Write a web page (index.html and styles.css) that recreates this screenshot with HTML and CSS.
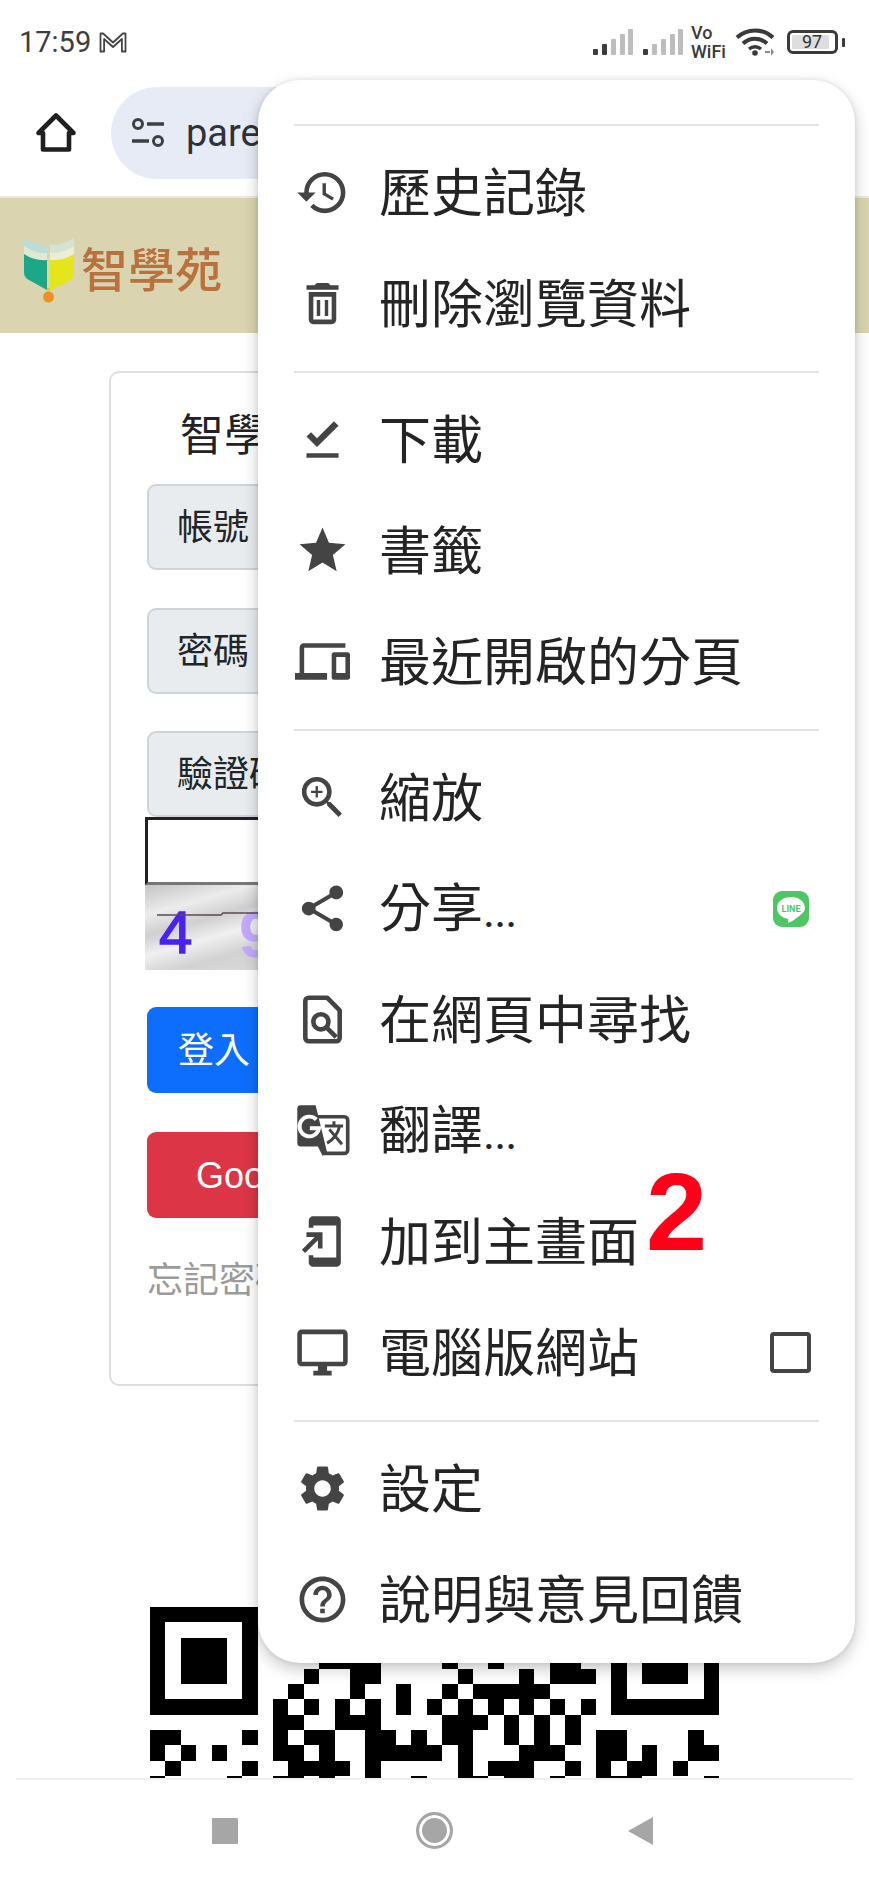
FILE: index.html
```html
<!DOCTYPE html>
<html lang="zh-Hant">
<head>
<meta charset="utf-8">
<title>智學苑</title>
<link rel="stylesheet" href="styles.css">
</head>
<body>
<div class="phone">
  <div class="status">
    <span class="time">17:59</span>
    <svg class="gmail" viewBox="0 0 28 22"><path d="M1.5 20.5V2.5h2.6L14 11.5l9.9-9h2.6v18h-3.6V8L14 16 5.100 8v12.500z" fill="none" stroke="#444" stroke-width="1.800" stroke-linejoin="round"/></svg>
    <div class="status-right">
      <svg class="signal" viewBox="0 0 40 26"><rect x="0" y="20" width="5" height="6" rx="1" fill="#3d3d3d"/><rect x="9" y="15" width="5" height="11" rx="1" fill="#3d3d3d"/><rect x="18" y="10" width="5" height="16" rx="1" fill="#bdbdbd"/><rect x="27" y="5" width="5" height="21" rx="1" fill="#bdbdbd"/><rect x="35" y="0" width="5" height="26" rx="1" fill="#bdbdbd"/></svg>
      <svg class="signal" viewBox="0 0 40 26"><rect x="0" y="20" width="5" height="6" rx="1" fill="#3d3d3d"/><rect x="9" y="15" width="5" height="11" rx="1" fill="#bdbdbd"/><rect x="18" y="10" width="5" height="16" rx="1" fill="#bdbdbd"/><rect x="27" y="5" width="5" height="21" rx="1" fill="#bdbdbd"/><rect x="35" y="0" width="5" height="26" rx="1" fill="#bdbdbd"/></svg>
      <div class="vowifi"><span>Vo</span><span>WiFi</span></div>
      <svg class="wifi" viewBox="0 0 40 28"><path d="M2 9.500C12 0 28 0 38 9.500" fill="none" stroke="#3a3a3a" stroke-width="4"/><path d="M8 15.500C15 9 25 9 32 15.500" fill="none" stroke="#3a3a3a" stroke-width="4"/><path d="M14 21c3.500-3 8.500-3 12 0" fill="none" stroke="#3a3a3a" stroke-width="3.500"/><circle cx="20" cy="25" r="2.800" fill="#3a3a3a"/><path d="M30 23h5v2h-5zM36 20l3 4-3 4z" fill="#8a8a8a"/></svg>
      <div class="battery"><div class="battery-body"><span class="battery-fill">97</span></div><i class="battery-nub"></i></div>
    </div>
  </div>

  <div class="toolbar">
    <svg class="home" viewBox="0 0 42 42"><path d="M21 3.500 3.500 21H8v16.500h26V21h4.500z" fill="none" stroke="#1f1f1f" stroke-width="4.600" stroke-linejoin="round"/></svg>
    <div class="address">
      <svg class="tune" viewBox="0 0 34 30"><circle cx="7" cy="6" r="4.500" fill="none" stroke="#3c4043" stroke-width="3"/><path d="M16 6h17M1 23h17" stroke="#3c4043" stroke-width="3.400"/><circle cx="27" cy="23" r="4.500" fill="none" stroke="#3c4043" stroke-width="3"/></svg>
      <span class="url">parent.example.tw</span>
    </div>
  </div>

  <header class="site-head">
    <svg class="logo-mark" viewBox="0 0 54 72">
      <path d="M2 6Q14 14 25 13V24Q12 24 2 16z" fill="#bcdcd8"/>
      <path d="M2 14Q14 22 25 21V30Q12 30 2 22z" fill="#dfe9d2"/>
      <path d="M2 22Q12 29 25 28V58L7 48Q2 46 2 40z" fill="#1aa886"/>
      <path d="M52 6Q40 14 28 13V24Q42 24 52 16z" fill="#d3e4d6"/>
      <path d="M52 14Q40 22 28 21V30Q42 30 52 22z" fill="#ebeed2"/>
      <path d="M52 22Q42 29 28 28V58L46 50Q52 47 52 41z" fill="#e6e41a"/>
      <path d="M25 56h3v8h-3z" fill="#e8c63a"/>
      <circle cx="26.500" cy="65" r="5.500" fill="#ee9122"/>
    </svg>
    <span class="logo-text">智學苑</span>
  </header>

  <main class="content">
    <section class="card">
      <h1 class="card-title">智學苑</h1>
      <div class="field"><span class="field-label">帳號</span><span class="field-input"></span></div>
      <div class="field"><span class="field-label">密碼</span><span class="field-input"></span></div>
      <div class="field field-tight"><span class="field-label">驗證碼</span><span class="field-input"></span></div>
      <div class="captcha-input"></div>
      <svg class="captcha" viewBox="0 0 300 85">
        <defs><linearGradient id="cg" x1="0" y1="0" x2="1" y2="1"><stop offset="0" stop-color="#c4c4c4"/><stop offset=".18" stop-color="#ececec"/><stop offset=".3" stop-color="#cfcfcf"/><stop offset=".42" stop-color="#f0f0f0"/><stop offset=".55" stop-color="#d2d2d2"/><stop offset="1" stop-color="#e8e8e8"/></linearGradient></defs>
        <rect width="300" height="85" fill="url(#cg)"/>
        <text class="cap-a" x="14" y="68">4</text>
        <text class="cap-b" x="94" y="72">9</text>
        <path d="M12 30H76l2-2H130" fill="none" stroke="#5c4a55" stroke-width="1.600"/>
      </svg>
      <button class="btn btn-blue">登入</button>
      <button class="btn btn-red">Google 登入</button>
      <p class="forgot">忘記密碼</p>
    </section>
    <svg class="qr" viewBox="0 0 37 37" shape-rendering="crispEdges">
      <path d="M0 0h7v7H0zM1 1v5h5V1zM2 2h3v3H2z" fill-rule="evenodd"/>
      <path d="M30 0h7v7h-7zM31 1v5h5V1zM32 2h3v3h-3z" fill-rule="evenodd"/>
      <path d="M11 3h4v1h-4zM19 3h1v1h-1zM22 3h1v1h-1zM26 3h2v1h-2z"/>
      <path d="M10 4h1v1h-1zM13 4h2v1h-2zM20 4h1v1h-1zM24 4h1v1h-1zM26 4h3v1h-3z"/>
      <path d="M9 5h1v1H9zM13 5h1v1h-1zM16 5h1v1h-1zM19 5h1v1h-1zM21 5h5v1h-5z"/>
      <path d="M8 6h1v1H8zM10 6h1v1h-1zM12 6h1v1h-1zM14 6h1v1h-1zM16 6h1v1h-1zM18 6h1v1h-1zM20 6h1v1h-1zM22 6h1v1h-1zM24 6h1v1h-1zM26 6h1v1h-1zM28 6h1v1h-1z"/>
      <path d="M8 7h2v1H8zM12 7h3v1h-3zM19 7h3v1h-3zM23 7h1v1h-1zM25 7h1v1h-1zM27 7h1v1h-1z"/>
      <path d="M0 8h2v1H0zM6 8h1v1H6zM8 8h1v1H8zM10 8h2v1h-2zM14 8h2v1h-2zM17 8h1v1h-1zM19 8h2v1h-2zM23 8h1v1h-1zM25 8h1v1h-1zM27 8h1v1h-1zM29 8h2v1h-2zM35 8h1v1h-1z"/>
      <path d="M0 9h1v1H0zM2 9h1v1H2zM4 9h1v1H4zM8 9h2v1H8zM11 9h1v1h-1zM14 9h5v1h-5zM20 9h1v1h-1zM24 9h3v1h-3zM29 9h2v1h-2zM32 9h1v1h-1zM35 9h2v1h-2z"/>
      <path d="M1 10h1v1H1zM6 10h1v1H6zM9 10h4v1H9zM14 10h1v1h-1zM20 10h1v1h-1zM22 10h3v1h-3zM27 10h1v1h-1zM29 10h1v1h-1zM31 10h2v1h-2zM34 10h1v1h-1z"/>
      <path d="M0 11h1v1H0zM5 11h1v1H5zM8 11h2v1H8zM11 11h1v1h-1zM14 11h1v1h-1zM17 11h1v1h-1zM20 11h2v1h-2zM23 11h2v1h-2zM26 11h1v1h-1zM29 11h3v1h-3zM36 11h1v1h-1z"/>
    </svg>
  </main>

  <nav class="nav">
    <i class="nav-stop"></i>
    <i class="nav-home"></i>
    <svg class="nav-back" viewBox="0 0 25 28"><path d="M25 0v28L0 14z" fill="#a6a6a6"/></svg>
  </nav>

  <aside class="menu">
    <div class="menu-sec">
      <div class="menu-row"><svg class="ic" viewBox="0 0 24 24"><path d="M13 3a9 9 0 0 0-9 9H1l3.890 3.890.07.14L9 12H6c0-3.870 3.130-7 7-7s7 3.130 7 7-3.130 7-7 7c-1.930 0-3.680-.79-4.940-2.060l-1.420 1.420A8.954 8.954 0 0 0 13 21a9 9 0 0 0 0-18zm-1 5v5l4.280 2.540.72-1.210-3.500-2.080V8H12z"/></svg><span>歷史記錄</span></div>
      <div class="menu-row"><svg class="ic" viewBox="0 0 24 24"><path d="M6 19c0 1.100.9 2 2 2h8c1.100 0 2-.9 2-2V7H6v12zM8 9h8v10H8V9zm7.500-5l-1-1h-5l-1 1H5v2h14V4h-3.500zM9.500 10.500H11v7H9.500zM13 10.500h1.500v7H13z"/></svg><span>刪除瀏覽資料</span></div>
    </div>
    <div class="menu-sec">
      <div class="menu-row"><svg class="ic" viewBox="0 0 24 24"><path d="M5 18h14v2H5v-2zm4.600-2.700L5 10.700l2-1.900 2.600 2.600L17 4l2 2-9.400 9.300z"/></svg><span>下載</span></div>
      <div class="menu-row"><svg class="ic" viewBox="0 0 24 24"><path d="M12 17.270L18.180 21l-1.640-7.030L22 9.240l-7.190-.61L12 2 9.190 8.630 2 9.240l5.460 4.730L5.820 21z"/></svg><span>書籤</span></div>
      <div class="menu-row"><svg class="ic" viewBox="0 0 24 24"><path d="M4 6h18V4H4c-1.100 0-2 .9-2 2v11H0v3h14v-3H4V6zm19 2h-6c-.55 0-1 .45-1 1v10c0 .55.45 1 1 1h6c.55 0 1-.45 1-1V9c0-.55-.45-1-1-1zm-1 9h-4v-7h4v7z"/></svg><span>最近開啟的分頁</span></div>
    </div>
    <div class="menu-sec">
      <div class="menu-row"><svg class="ic" viewBox="0 0 24 24"><path d="M15.500 14h-.79l-.28-.27A6.471 6.471 0 0 0 16 9.500 6.500 6.500 0 1 0 9.500 16c1.610 0 3.090-.59 4.230-1.570l.27.28v.79l5 4.990L20.490 19l-4.990-5zm-6 0C7.010 14 5 11.990 5 9.500S7.010 5 9.500 5 14 7.010 14 9.500 11.990 14 9.500 14zM12 10h-2v2H9v-2H7V9h2V7h1v2h2v1z"/></svg><span>縮放</span></div>
      <div class="menu-row"><svg class="ic" viewBox="0 0 24 24"><path d="M18 16.080c-.76 0-1.440.3-1.960.77L8.910 12.700c.05-.23.09-.46.09-.7s-.04-.47-.09-.7l7.050-4.110c.54.5 1.250.81 2.040.81 1.660 0 3-1.340 3-3s-1.340-3-3-3-3 1.340-3 3c0 .24.04.47.09.7L8.040 9.810C7.500 9.310 6.790 9 6 9c-1.660 0-3 1.340-3 3s1.340 3 3 3c.79 0 1.500-.31 2.040-.81l7.120 4.160c-.05.21-.08.43-.08.65 0 1.610 1.310 2.920 2.920 2.920s2.920-1.310 2.920-2.920-1.310-2.920-2.920-2.920z"/></svg><span>分享<b class="dots">...</b></span>
        <svg class="line-ic" viewBox="0 0 36 36"><rect width="36" height="36" rx="9" fill="#4cc764"/><path d="M18 6c-8 0-14 4.800-14 11 0 5.300 4.500 9.800 10.500 10.800.8.2.9.700.8 1.300l-.2 1.900c0 .6.400 1 1.100.6 3-1.600 9-5.300 12.300-8.700C30.600 21.500 32 19.400 32 17 32 10.800 26 6 18 6z" fill="#fff"/><text class="line-txt" x="18" y="20.500" text-anchor="middle">LINE</text></svg>
      </div>
      <div class="menu-row"><svg class="ic" viewBox="0 0 24 24"><path d="M7 2.500h7l5.500 5.500v12a1.500 1.500 0 0 1-1.500 1.500H6A1.500 1.500 0 0 1 4.500 20V4A1.500 1.500 0 0 1 6 2.500z" fill="none" stroke="#444" stroke-width="2" stroke-linejoin="round"/><circle cx="11.300" cy="13" r="3.300" fill="none" stroke="#444" stroke-width="2"/><path d="M13.800 15.500 18 19.700" stroke="#444" stroke-width="2"/></svg><span>在網頁中尋找</span></div>
      <div class="menu-row"><svg class="ic" viewBox="0 0 24 24"><path d="M10 6h11.500a1.500 1.500 0 0 1 1.500 1.500v13a1.500 1.500 0 0 1-1.500 1.500H12" fill="none" stroke="#444" stroke-width="1.600"/><path d="M2.500 1H9l5 20.500-2 1.500-2-4H2.500A1.500 1.500 0 0 1 1 17.500v-15A1.500 1.500 0 0 1 2.500 1z" fill="#444"/><path d="M9.300 7.200A4.300 4.300 0 1 0 10.500 11H6.500" fill="none" stroke="#fff" stroke-width="1.700"/><path d="M13 10h8M17 8v2M19.500 10c-.8 3.500-2.700 6-5.500 7.500M15 11.500l5.500 6.500" fill="none" stroke="#444" stroke-width="1.300"/></svg><span>翻譯<b class="dots">...</b></span></div>
      <div class="menu-row"><svg class="ic" viewBox="0 0 24 24"><path d="M18 1.010L8 1c-1.100 0-2 .9-2 2v3h2V5h10v14H8v-1H6v3c0 1.100.9 2 2 2h10c1.100 0 2-.9 2-2V3c0-1.100-.9-1.990-2-1.990zM10 15h2V8H5v2h3.590L3 15.590 4.410 17 10 11.410z"/></svg><span>加到主畫面</span></div>
      <div class="menu-row"><svg class="ic" viewBox="0 0 24 24"><path d="M21 2H3c-1.100 0-2 .9-2 2v12c0 1.100.9 2 2 2h7v2H8v2h8v-2h-2v-2h7c1.100 0 2-.9 2-2V4c0-1.100-.9-2-2-2zm0 14H3V4h18v12z"/></svg><span>電腦版網站</span><i class="check"></i></div>
    </div>
    <div class="menu-sec menu-sec-last">
      <div class="menu-row"><svg class="ic" viewBox="0 0 24 24"><path d="M19.140 12.940c.04-.3.06-.61.06-.94 0-.32-.02-.64-.07-.94l2.030-1.580a.49.49 0 0 0 .12-.61l-1.920-3.320a.488.488 0 0 0-.59-.22l-2.390.96c-.5-.38-1.030-.7-1.620-.94l-.36-2.540a.484.484 0 0 0-.48-.41h-3.840c-.24 0-.43.17-.47.41l-.36 2.540c-.59.24-1.130.57-1.620.94l-2.390-.96c-.22-.08-.47 0-.59.22L2.740 8.870c-.12.21-.08.47.12.61l2.030 1.580c-.05.3-.09.63-.09.94s.02.64.07.94l-2.030 1.580a.49.49 0 0 0-.12.61l1.920 3.320c.12.22.37.29.59.22l2.390-.96c.5.38 1.030.7 1.620.94l.36 2.540c.05.24.24.41.48.41h3.840c.24 0 .44-.17.47-.41l.36-2.540c.59-.24 1.130-.56 1.620-.94l2.390.96c.22.08.47 0 .59-.22l1.920-3.320c.12-.22.07-.47-.12-.61l-2.010-1.580zM12 15.600c-1.980 0-3.600-1.620-3.600-3.600s1.620-3.600 3.600-3.600 3.600 1.620 3.600 3.600-1.620 3.600-3.600 3.600z"/></svg><span>設定</span></div>
      <div class="menu-row"><svg class="ic" viewBox="0 0 24 24"><path d="M11 18h2v-2h-2v2zm1-16C6.480 2 2 6.480 2 12s4.480 10 10 10 10-4.480 10-10S17.520 2 12 2zm0 18c-4.410 0-8-3.590-8-8s3.590-8 8-8 8 3.590 8 8-3.590 8-8 8zm0-14c-2.210 0-4 1.790-4 4h2c0-1.100.9-2 2-2s2 .9 2 2c0 2-3 1.750-3 5h2c0-2.250 3-2.500 3-5 0-2.210-1.790-4-4-4z"/></svg><span>說明與意見回饋</span></div>
    </div>
  </aside>
  <span class="step">2</span>
</div>
</body>
</html>
```
FILE: styles.css
```css
* { box-sizing: border-box; }
html, body { margin: 0; padding: 0; background: #fff; }
body { font-family: "Noto Sans CJK TC", "Liberation Sans", sans-serif; }
.phone { position: relative; width: 869px; height: 1883px; overflow: hidden; display: flex; flex-direction: column; background: #fff; }

/* status bar */
.status { height: 78px; flex: none; display: flex; align-items: center; padding: 6px 24px 0 19px; }
.time { font: 400 29px/1 Roboto, sans-serif; color: #3d3d3d; }
.gmail { width: 28px; height: 22px; margin-left: 8px; }
.status-right { margin-left: auto; display: flex; align-items: center; }
.signal { width: 40px; height: 26px; margin-right: 10px; }
.signal + .vowifi { margin-left: -2px; }
.vowifi { width: 36px; display: flex; flex-direction: column; font: 500 18px/19px Roboto, sans-serif; color: #3a3a3a; margin-right: 8px; }
.wifi { width: 40px; height: 28px; margin-right: 12px; }
.battery { display: flex; align-items: center; }
.battery-body { width: 51px; height: 24px; border: 3px solid #3a3a3a; border-radius: 6px; padding: 2px; display: flex; }
.battery-fill { flex: none; width: 37px; background: #dedede; color: #333; border-radius: 1px; font: 400 18px/14px Roboto, sans-serif; text-align: center; padding-left: 3px; }
.battery-nub { width: 3px; height: 9px; margin-left: 4px; background: #3a3a3a; border-radius: 1px; }

/* toolbar */
.toolbar { height: 120px; flex: none; display: flex; align-items: center; padding: 0 20px 9px 35px; border-bottom: 2px solid #ebe9e0; }
.home { width: 42px; height: 42px; flex: none; margin-right: 34px; }
.address { flex: 1; height: 92px; background: #e6ebf5; border-radius: 46px; display: flex; align-items: center; padding-left: 20px; }
.tune { width: 34px; height: 30px; flex: none; }
.url { margin-left: 21px; font: 400 38px/1 Roboto, sans-serif; color: #2f3237; white-space: nowrap; }

/* site header */
.site-head { height: 135px; flex: none; background: #dad5b0; display: flex; align-items: center; padding: 4px 0 0 22px; }
.logo-mark { width: 54px; height: 72px; flex: none; filter: blur(.6px); }
.logo-text { margin-left: 5px; font-size: 47px; font-weight: 500; line-height: 1; color: #b9713d; filter: blur(.5px); position: relative; top: -1px; }

/* page content */
.content { flex: 1; min-height: 0; overflow: hidden; padding: 38px 110px 0 109px; }
.card { height: 1015px; border: 2px solid #dcdfe2; border-radius: 10px; padding: 0 36px; }
.card-title { margin: 30px 0 0 33px; height: 81px; font-size: 44px; line-height: 58px; font-weight: 400; color: #222; white-space: nowrap; }
.field { display: flex; height: 86px; margin-bottom: 37.500px; }
.field-tight { margin-bottom: 0; }
.field-label { background: #e9ecef; border: 2px solid #ced4da; border-radius: 9px 0 0 9px; padding: 0 28px; font-size: 36px; line-height: 77px; color: #212529; white-space: nowrap; }
.field-input { flex: 1; border: 2px solid #ced4da; border-left: 0; border-radius: 0 9px 9px 0; }
.captcha-input { height: 68px; width: 300px; margin-left: -2px; border: 3px solid #222; border-bottom-color: #777; }
.captcha { display: block; width: 300px; height: 85px; margin-left: -2px; }
.cap-a { font: 400 60px "Liberation Sans", sans-serif; fill: #4a22ee; stroke: #4a22ee; stroke-width: 1.500px; }
.cap-b { font: 700 64px "Liberation Sans", sans-serif; fill: #c3a9ff; }
.btn { display: block; height: 86px; margin: 0 0 39px; border: 0; border-radius: 9px; color: #fff; font-family: "Liberation Sans", "Noto Sans CJK TC", sans-serif; font-size: 36px; padding-bottom: 8px; }
.btn-blue { margin-top: 37px; padding-left: 31px; padding-right: 31px; background: #0d6efd; }
.btn-red { padding-left: 49px; padding-right: 49px; background: #dc3545; }
.forgot { margin: 0; font-size: 36px; line-height: 52px; color: #9b9b9b; position: relative; top: -6px; }
.qr { display: block; width: 569px; height: 569px; margin: 221px 0 0 41px; }

/* navigation */
.nav { height: 105px; flex: none; margin: 0 16px; border-top: 2px solid #eeeeee; display: flex; align-items: center; gap: 178px; padding: 0 0 2px 196px; }
.nav-stop { width: 26px; height: 26px; background: #a6a6a6; border-radius: 1px; }
.nav-home { width: 37px; height: 37px; border-radius: 50%; background: #a6a6a6; border: 3px solid #a6a6a6; box-shadow: inset 0 0 0 3px #fff; }
.nav-back { width: 25px; height: 28px; margin-left: -3px; }

/* overlay menu */
.menu { position: absolute; left: 258px; top: 80px; width: 597px; padding: 44px 0 8px; background: #fff; border-radius: 42px; box-shadow: 0 6px 16px rgba(0,0,0,.22), 0 0 4px rgba(0,0,0,.1); }
.menu-sec { margin: 0 36px; padding: 11px 0 12px; border-top: 2px solid #dfe5e5; }
.menu-sec-last { padding-bottom: 0; }
.menu-row { height: 111px; display: flex; align-items: center; margin-right: -36px; font-size: 52px; color: #242424; white-space: nowrap; }
.menu-row > span { line-height: 1; margin-top: -5px; }
.dots { font-weight: 400; letter-spacing: -1px; font-family: Roboto, sans-serif; font-size: 46px; }
.ic { width: 55px; height: 55px; flex: none; margin: 0 29px 0 1px; fill: #444; }
.line-ic { width: 36px; height: 36px; margin-left: auto; margin-right: 46px; }
.line-txt { font: 700 9px Roboto, sans-serif; fill: #4cc764; }
.check { width: 41px; height: 41px; margin-left: auto; margin-right: 44px; border: 4.500px solid #444; border-radius: 4px; }
.step { position: absolute; left: 646px; top: 1146px; font: 700 110px/1.2 "Liberation Sans", sans-serif; color: #ff0018; }
```
